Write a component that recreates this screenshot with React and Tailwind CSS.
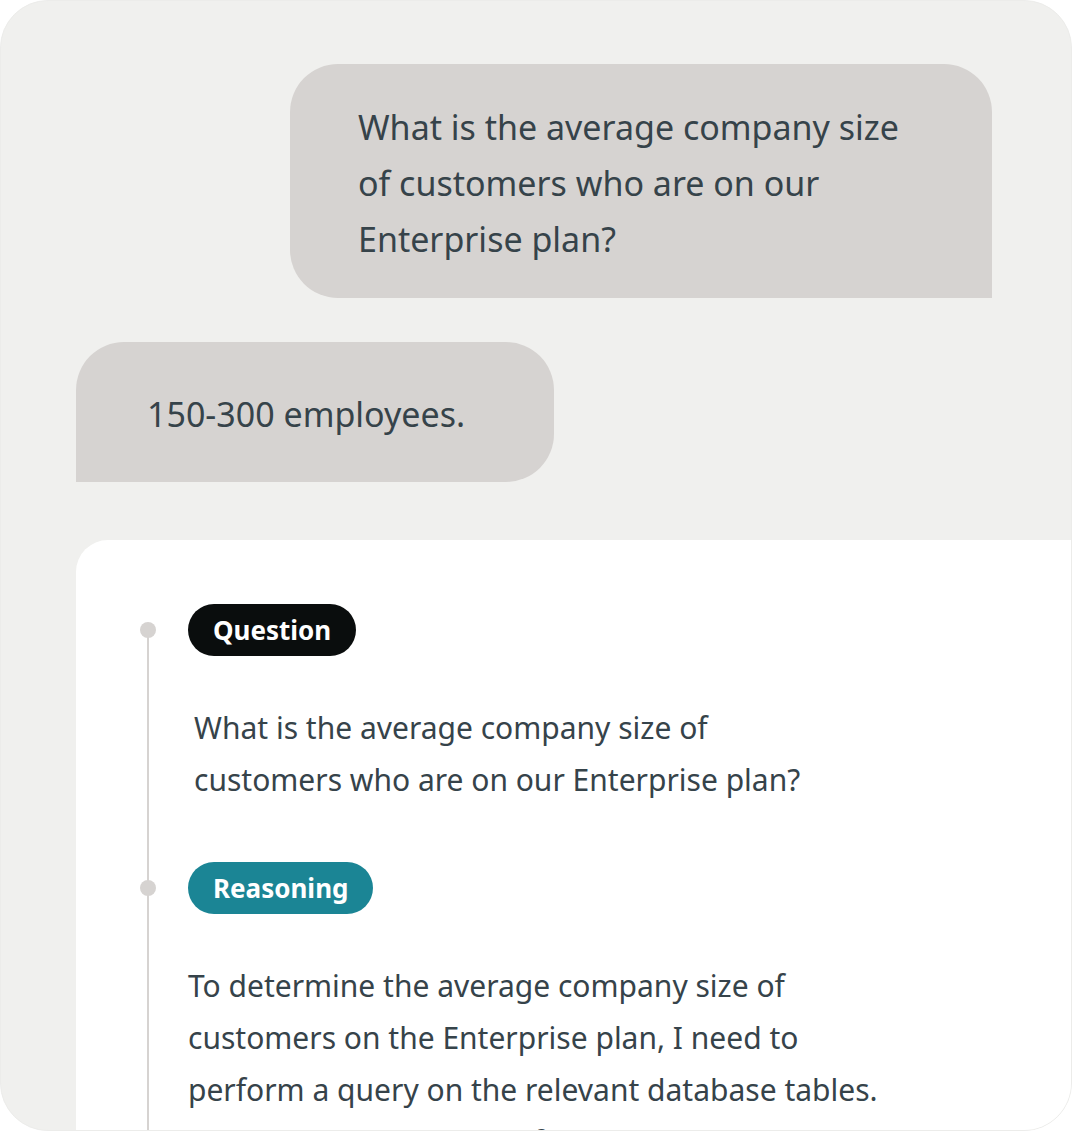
import React from "react";

const font = { fontFamily: '"Noto Sans", "Open Sans", sans-serif' };

function Step({ label, pillClass, children, textClass }) {
  return (
    <div className="relative">
      <span className="absolute -left-[48px] top-[18px] h-4 w-4 rounded-full bg-[#d6d3d1]" />
      <div className={`inline-flex h-[52px] items-center rounded-full px-[25px] text-[26px] font-bold text-white ${pillClass}`}>
        {label}
      </div>
      <p className={`mt-[46px] text-[30px] leading-[52px] text-[#36434a] ${textClass}`}>{children}</p>
    </div>
  );
}

export default function App() {
  return (
    <div
      style={font}
      className="h-[1131px] w-[1072px] overflow-hidden rounded-[48px] border border-[#ececea] bg-[#f0f0ee]"
    >
      <div className="flex flex-col pl-[75px] pt-[63px]">
        <div className="mr-[79px] self-end w-[702px] rounded-[48px] rounded-br-none bg-[#d6d3d1] pb-[31px] pl-[68px] pr-[40px] pt-[35px] text-[34px] leading-[56px] text-[#36434a]">
          What is the average company size<br />
          of customers who are on our<br />
          Enterprise plan?
        </div>

        <div className="mt-[44px] w-[478px] rounded-[48px] rounded-bl-none bg-[#d6d3d1] pb-[40px] pl-[71px] pt-[44px] text-[34px] leading-[56px] text-[#36434a]">
          150-300 employees.
        </div>

        <div className="relative mt-[58px] h-[600px] rounded-tl-[32px] bg-white pl-[112px] pt-16">
          <span className="absolute bottom-0 left-[71px] top-[88px] w-[2px] bg-[#d6d3d1]" />
          <Step label="Question" pillClass="bg-[#0a0d0d]" textClass="pl-[6px]">
            What is the average company size of<br />
            customers who are on our Enterprise plan?
          </Step>
          <div className="mt-[56px]">
            <Step label="Reasoning" pillClass="bg-[#1b8595]">
              To determine the average company size of<br />
              customers on the Enterprise plan, I need to<br />
              perform a query on the relevant database tables.<br />
              First, I will need to identify the tables that hold
            </Step>
          </div>
        </div>
      </div>
    </div>
  );
}
